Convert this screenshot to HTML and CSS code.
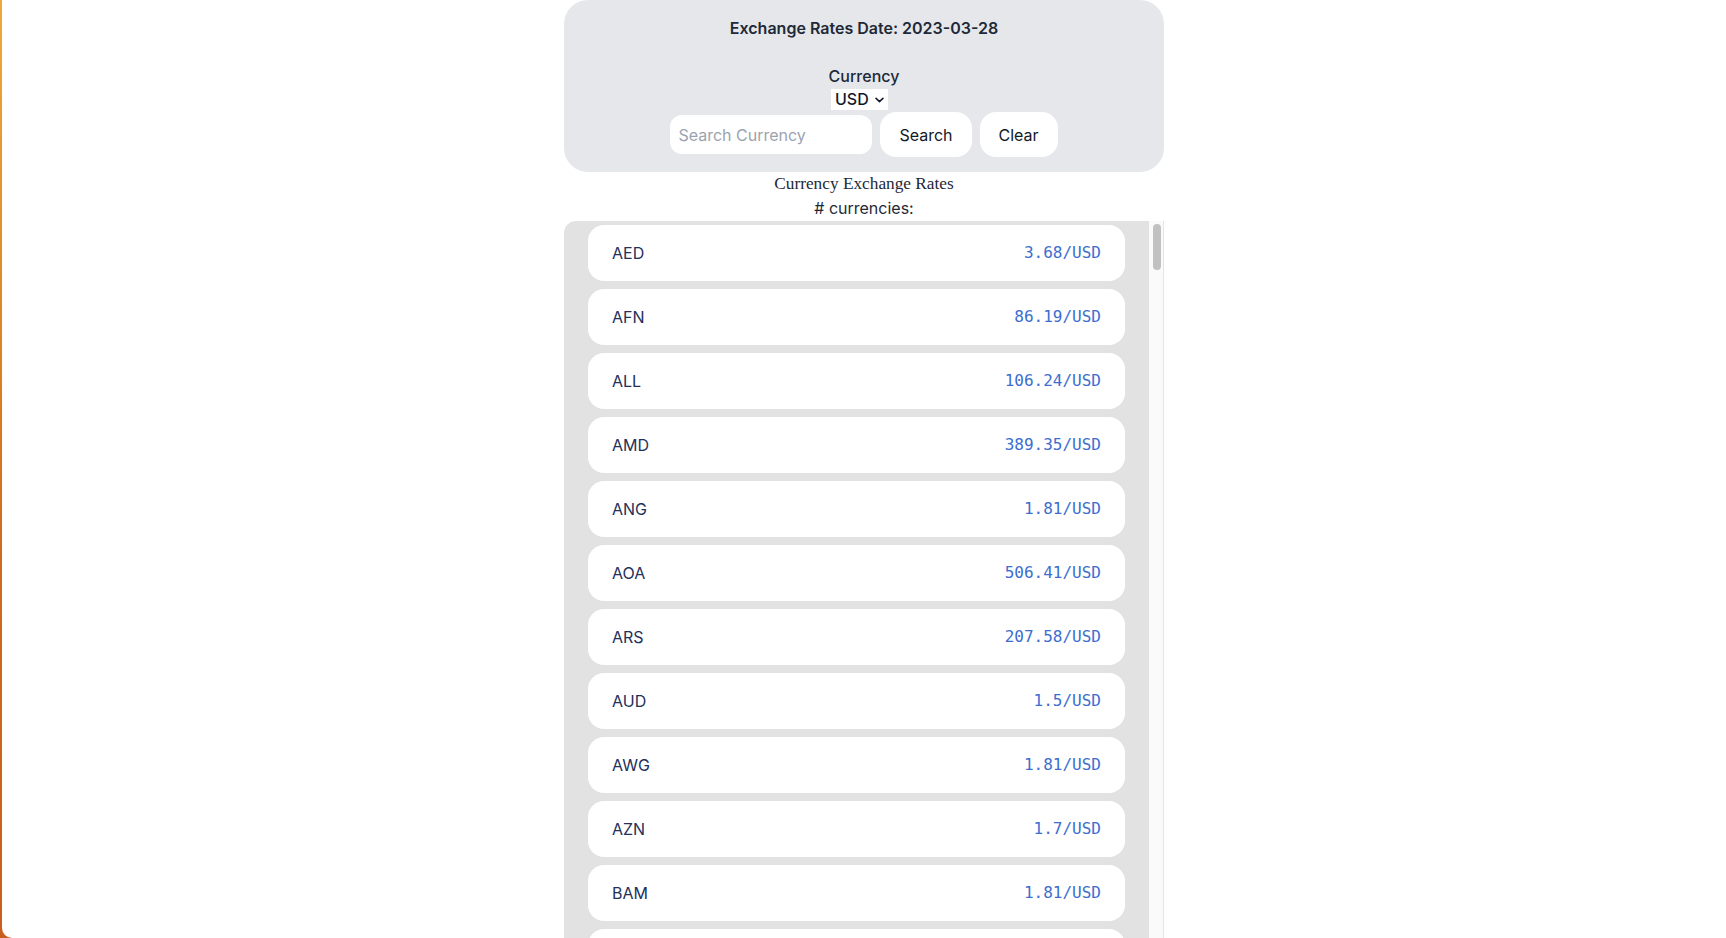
FILE: index.html
```html
<!DOCTYPE html>
<html lang="en">
<head>
<meta charset="utf-8">
<title>Currency Exchange Rates</title>
<link rel="stylesheet" href="styles.css">
</head>
<body>
<div class="page">
  <div class="wrap">
    <section class="header-card">
      <h1 class="date">Exchange Rates Date: 2023-03-28</h1>
      <div class="currency-field">
        <label class="field-label" for="base">Currency</label>
        <span class="select-wrap">
          <select id="base" class="select">
            <option>USD</option>
            <option>EUR</option>
            <option>GBP</option>
          </select>
          <svg class="chevron" viewBox="0 0 10 6" width="9" height="6" aria-hidden="true"><path d="M1.2 1.2l3.8 3.6 3.8-3.6" fill="none" stroke="#111827" stroke-width="1.7" stroke-linecap="round" stroke-linejoin="round"/></svg>
        </span>
      </div>
      <div class="search-row">
        <input class="search-input" type="text" placeholder="Search Currency">
        <button class="btn">Search</button>
        <button class="btn">Clear</button>
      </div>
    </section>
    <div class="caption">Currency Exchange Rates</div>
    <div class="count"># currencies:</div>
    <div class="list-frame">
      <ul class="list">
        <li class="row"><span class="code">AED</span><span class="rate">3.68/USD</span></li>
        <li class="row"><span class="code">AFN</span><span class="rate">86.19/USD</span></li>
        <li class="row"><span class="code">ALL</span><span class="rate">106.24/USD</span></li>
        <li class="row"><span class="code">AMD</span><span class="rate">389.35/USD</span></li>
        <li class="row"><span class="code">ANG</span><span class="rate">1.81/USD</span></li>
        <li class="row"><span class="code">AOA</span><span class="rate">506.41/USD</span></li>
        <li class="row"><span class="code">ARS</span><span class="rate">207.58/USD</span></li>
        <li class="row"><span class="code">AUD</span><span class="rate">1.5/USD</span></li>
        <li class="row"><span class="code">AWG</span><span class="rate">1.81/USD</span></li>
        <li class="row"><span class="code">AZN</span><span class="rate">1.7/USD</span></li>
        <li class="row"><span class="code">BAM</span><span class="rate">1.81/USD</span></li>
        <li class="row row-partial"></li>
      </ul>
      <div class="scroll-track" aria-hidden="true"><div class="scroll-thumb"></div></div>
    </div>
  </div>
</div>
</body>
</html>
```
FILE: styles.css
```css
html, body {
  margin: 0;
  padding: 0;
  height: 100%;
}

body {
  background: linear-gradient(to bottom, #eea93a 0%, #e08a2a 30%, #cf6a1e 60%, #c95f1c 100%);
  font-family: Inter, "Noto Sans", "Liberation Sans", sans-serif;
  color: #1f2937;
  overflow: hidden;
  padding-left: 2px;
  box-sizing: border-box;
}

.page {
  background: #ffffff;
  height: 100vh;
  border-bottom-left-radius: 10px;
  overflow: hidden;
}

.wrap {
  width: 600px;
  margin: 0 auto;
}

.header-card {
  background: #e5e7eb;
  border-radius: 24px;
  padding: 16px 0 15px;
  display: flex;
  flex-direction: column;
  align-items: center;
}

.date {
  margin: 0;
  font-size: 16px;
  line-height: 24px;
  font-weight: 600;
  color: #1f2937;
}

.currency-field {
  margin-top: 24px;
  display: flex;
  flex-direction: column;
  align-items: center;
}

.field-label {
  font-size: 16px;
  line-height: 24px;
  font-weight: 500;
  color: #1f2937;
}

.select-wrap {
  position: relative;
  display: inline-flex;
  margin-top: 1px;
  margin-right: 9px;
}

.select {
  appearance: none;
  -webkit-appearance: none;
  border: none;
  outline: none;
  background: #ffffff;
  font-family: inherit;
  font-size: 16px;
  line-height: 21px;
  height: 21px;
  padding: 0 19px 0 4px;
  margin: 0;
  color: #111827;
  font-weight: 500;
  border-radius: 0;
}

.chevron {
  position: absolute;
  right: 4px;
  top: 8px;
  pointer-events: none;
}

.search-row {
  margin-top: 2px;
  display: flex;
  align-items: center;
  gap: 8px;
}

.search-input {
  width: 202px;
  height: 39px;
  box-sizing: border-box;
  border: none;
  outline: none;
  border-radius: 12px;
  background: #ffffff;
  padding: 0 8px;
  font-family: inherit;
  font-size: 16px;
  color: #111827;
}

.search-input::placeholder {
  color: #9ca3af;
}

.btn {
  height: 45px;
  border: none;
  border-radius: 16px;
  background: #ffffff;
  padding: 0 19px;
  font-family: inherit;
  font-size: 16px;
  color: #111827;
  cursor: pointer;
}

.caption {
  text-align: center;
  font-family: "Liberation Serif", "Times New Roman", serif;
  font-size: 17.3px;
  line-height: 24px;
  color: #1f2937;
}

.count {
  text-align: center;
  font-size: 16px;
  line-height: 24px;
  color: #1f2937;
  margin-bottom: 1px;
}

.list-frame {
  display: flex;
  height: calc(100vh - 221px);
  background: #e2e2e2;
  border-radius: 12px 0 0 0;
  overflow: hidden;
}

.list {
  flex: 1;
  list-style: none;
  margin: 0;
  padding: 4px 24px;
  overflow: hidden;
  display: flex;
  flex-direction: column;
  gap: 8px;
}

.scroll-track {
  flex: 0 0 15px;
  box-sizing: border-box;
  background: #fafafa;
  border-right: 1px solid #e4e4e4;
  padding: 3px 0 0 4px;
}

.scroll-thumb {
  width: 8px;
  height: 46px;
  border-radius: 4px;
  background: #c1c1c1;
}

.row {
  flex: 0 0 auto;
  height: 56px;
  box-sizing: border-box;
  padding: 0 24px;
  background: #ffffff;
  border-radius: 16px;
  display: flex;
  align-items: center;
  justify-content: space-between;
}

.code {
  font-size: 16px;
  line-height: 24px;
  color: #23305a;
}

.rate {
  font-family: "DejaVu Sans Mono", "Liberation Mono", monospace;
  font-size: 16px;
  line-height: 24px;
  color: #3c6ed0;
}
```
